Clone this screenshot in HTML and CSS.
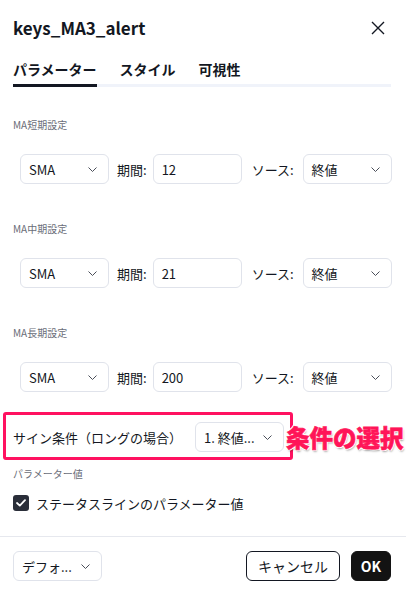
FILE: index.html
```html
<!DOCTYPE html>
<html lang="ja">
<head>
<meta charset="utf-8">
<link rel="stylesheet" href="styles.css">
</head>
<body>
<div class="dialog">
  <div class="content">
    <header class="head">
      <h1 class="title">keys_MA3_alert</h1>
      <svg class="close" width="14" height="14" viewBox="0 0 14 14"><path d="M1 1L13 13M13 1L1 13" stroke="#131722" stroke-width="1.4" fill="none"/></svg>
    </header>
    <nav class="tabs">
      <span class="tab active">パラメーター</span>
      <span class="tab">スタイル</span>
      <span class="tab">可視性</span>
    </nav>

    <div class="group-label first">MA短期設定</div>
    <div class="ma-row">
      <div class="select w89"><span>SMA</span><svg class="chev" width="9" height="5" viewBox="0 0 9 5"><path d="M0.5 0.5L4.5 4.5L8.5 0.5" stroke="#4a4e59" fill="none"/></svg></div>
      <span class="lbl period">期間:</span>
      <div class="input w89">12</div>
      <span class="lbl source">ソース:</span>
      <div class="select w89"><span>終値</span><svg class="chev" width="9" height="5" viewBox="0 0 9 5"><path d="M0.5 0.5L4.5 4.5L8.5 0.5" stroke="#4a4e59" fill="none"/></svg></div>
    </div>

    <div class="group-label">MA中期設定</div>
    <div class="ma-row">
      <div class="select w89"><span>SMA</span><svg class="chev" width="9" height="5" viewBox="0 0 9 5"><path d="M0.5 0.5L4.5 4.5L8.5 0.5" stroke="#4a4e59" fill="none"/></svg></div>
      <span class="lbl period">期間:</span>
      <div class="input w89">21</div>
      <span class="lbl source">ソース:</span>
      <div class="select w89"><span>終値</span><svg class="chev" width="9" height="5" viewBox="0 0 9 5"><path d="M0.5 0.5L4.5 4.5L8.5 0.5" stroke="#4a4e59" fill="none"/></svg></div>
    </div>

    <div class="group-label">MA長期設定</div>
    <div class="ma-row">
      <div class="select w89"><span>SMA</span><svg class="chev" width="9" height="5" viewBox="0 0 9 5"><path d="M0.5 0.5L4.5 4.5L8.5 0.5" stroke="#4a4e59" fill="none"/></svg></div>
      <span class="lbl period">期間:</span>
      <div class="input w89">200</div>
      <span class="lbl source">ソース:</span>
      <div class="select w89"><span>終値</span><svg class="chev" width="9" height="5" viewBox="0 0 9 5"><path d="M0.5 0.5L4.5 4.5L8.5 0.5" stroke="#4a4e59" fill="none"/></svg></div>
    </div>

    <div class="sign-row">
      <span class="sign-label">サイン条件（ロングの場合）</span>
      <div class="select w89 sign-select"><span>1. 終値...</span><svg class="chev" width="9" height="5" viewBox="0 0 9 5"><path d="M0.5 0.5L4.5 4.5L8.5 0.5" stroke="#4a4e59" fill="none"/></svg></div>
      <div class="highlight"></div>
      <div class="annotation">条件の選択</div>
    </div>

    <div class="group-label small-gap">パラメーター値</div>
    <label class="check-row">
      <span class="checkbox"><svg width="10" height="8" viewBox="0 0 10 8"><path d="M1 4L3.8 6.6L9 1.2" stroke="#fff" stroke-width="1.8" fill="none" stroke-linecap="round" stroke-linejoin="round"/></svg></span>
      <span class="check-label">ステータスラインのパラメーター値</span>
    </label>
  </div>

  <div class="sep"></div>

  <footer class="footer">
    <div class="select w89"><span>デフォ...</span><svg class="chev" width="9" height="5" viewBox="0 0 9 5"><path d="M0.5 0.5L4.5 4.5L8.5 0.5" stroke="#4a4e59" fill="none"/></svg></div>
    <div class="spacer"></div>
    <button class="btn cancel">キャンセル</button>
    <button class="btn ok">OK</button>
  </footer>
</div>
</body>
</html>
```

FILE: styles.css
```css
* { box-sizing: border-box; }
html, body { margin: 0; padding: 0; background: #fff; }
body {
  font-family: "Noto Sans CJK JP", "Noto Sans", sans-serif;
  color: #131722;
  font-size: 13px;
}
.dialog { width: 406px; height: 593px; }
.content { padding: 0 15px 0 13px; }

.head {
  display: flex;
  align-items: center;
  justify-content: space-between;
  padding-top: 16px;
  height: 40px;
}
.title {
  margin: 0;
  font-size: 17px;
  font-weight: 700;
  line-height: 24px;
}
.close { margin-right: 6px; }

.tabs {
  display: flex;
  gap: 23px;
  margin-top: 19px;
  border-bottom: 3px solid #f0f3fa;
}
.tab {
  font-size: 14px;
  font-weight: 700;
  line-height: 20px;
  padding-bottom: 5px;
  margin-bottom: -3px;
  border-bottom: 3px solid transparent;
}
.tab.active { border-bottom-color: #131722; }

.group-label {
  font-size: 10px;
  line-height: 14px;
  color: #6a6d78;
  margin-top: 38px;
}
.group-label.first { margin-top: 31px; }
.group-label.small-gap { margin-top: 15px; }

.ma-row {
  display: flex;
  align-items: center;
  margin-top: 22px;
  padding-left: 7px;
  height: 30px;
}
.select, .input {
  height: 30px;
  border: 1px solid #e0e3eb;
  border-radius: 6px;
  display: flex;
  align-items: center;
  padding: 0 11px 0 8px;
  font-size: 13px;
  background: #fff;
}
.select { justify-content: space-between; }
.w89 { width: 89px; flex: none; }
.chev { flex: none; }
.lbl { font-size: 13px; white-space: nowrap; }
.period { margin: 0 6px 0 8px; }
.source { margin: 0 9px 0 10px; }

.sign-row {
  position: relative;
  display: flex;
  align-items: center;
  height: 30px;
  margin-top: 30px;
}
.sign-label { width: 182px; font-size: 13px; }
.sign-select { width: 89px; }
.highlight {
  position: absolute;
  left: -10px;
  top: -10px;
  width: 290px;
  height: 48px;
  border: 3px solid #ff1160;
  border-radius: 3px;
}
.annotation {
  position: absolute;
  left: 273px;
  top: 50%;
  transform: translateY(-50%);
  font-size: 23.5px;
  font-weight: 900;
  color: #ff1558;
  white-space: nowrap;
  -webkit-text-stroke: 0.6px #ff1558;
  text-shadow: 1px 1px 0 #fff, -1px -1px 0 #fff, 1px -1px 0 #fff, -1px 1px 0 #fff, 1px 2px 2px rgba(0,0,0,0.35);
}

.check-row {
  display: flex;
  align-items: center;
  gap: 7px;
  margin-top: 12px;
  height: 20px;
}
.checkbox {
  width: 16px;
  height: 16px;
  border-radius: 3px;
  background: #2a2e39;
  display: flex;
  align-items: center;
  justify-content: center;
}
.check-label { font-size: 13px; }

.sep { height: 1px; background: #e6e8ee; margin-top: 23px; }

.footer {
  display: flex;
  align-items: center;
  padding: 0 15px 0 13px;
  margin-top: 14px;
}
.spacer { flex: 1; }
.btn {
  font-family: inherit;
  height: 30px;
  border-radius: 6px;
  font-size: 14px;
  padding: 0;
}
.cancel {
  width: 94px;
  background: #fff;
  border: 1px solid #131722;
  color: #131722;
}
.ok {
  width: 40px;
  margin-left: 11px;
  background: #131313;
  border: 1px solid #131313;
  color: #fff;
  font-weight: 700;
}
```
